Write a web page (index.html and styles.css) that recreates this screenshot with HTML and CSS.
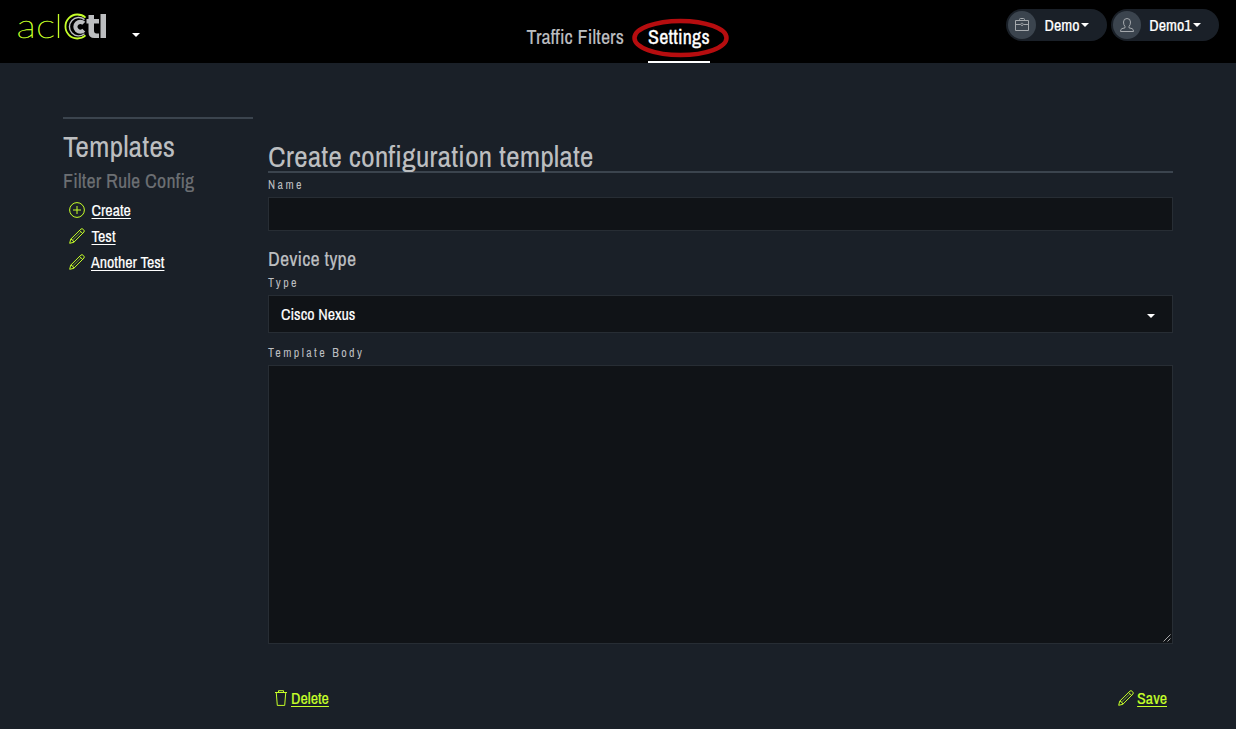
FILE: index.html
```
<!DOCTYPE html>
<html lang="en">
<head>
<meta charset="utf-8">
<title>aclCtl</title>
<link rel="stylesheet" href="styles.css">
</head>
<body>
<svg class="defs" aria-hidden="true">
  <symbol id="pencil" viewBox="0 0 16 16"><path d="M.7 15.300 1.700 11.200 11.900 1.100Q13 .2 14.300 1.400L14.600 1.700Q15.800 3 14.900 4.100L4.800 14.300ZM10.600 2.400l3 3M1.700 11.200q2.700.4 3.100 3.100" /><path class="faint" d="M3.400 12.300l8.600-8.500" /></symbol>
</svg>
<header class="topbar">
  <div class="brand">
    <svg class="logo" viewBox="0 0 90 36" role="img" aria-label="aclCtl">
      <text class="logo-thin" x="-1.500" y="26" textLength="38.500" lengthAdjust="spacingAndGlyphs">ac</text>
      <path class="logo-line" d="M40.500 2v24" />
      <path class="logo-ring" d="M67.500 5.600A12 12 0 1 0 67.500 23.400" />
      <path class="logo-arc" d="M66.500 7.600A9.200 9.200 0 1 0 66.500 21.800" />
      <path class="logo-c" d="M65.800 11.300A4.900 4.900 0 1 0 65.800 18.300" />
      <path class="logo-fill" d="M70.500 3h5.500v4h5v4.500h-5v7q0 3 2.500 3H81V26h-4.500q-6 0-6-6v-8.500h-2V7h2ZM82.500 2H88v24h-5.500Z" />
    </svg>
    <i class="caret"></i>
  </div>
  <nav class="nav">
    <a class="nav-link filters">Traffic Filters</a>
    <a class="nav-link active"><span>Settings</span>
      <svg class="ring" viewBox="0 0 98 40"><ellipse cx="49.500" cy="20" rx="46" ry="17" /></svg>
    </a>
  </nav>
  <div class="menus">
    <button class="pill team"><span class="disc"><svg viewBox="0 0 16 16"><path d="M1.500 3.500h13v10h-13ZM5.500 3.500v-1q0-1 1-1h3q1 0 1 1v1M1.500 7.500h5M9.500 7.500h5M8 6.200a1.200 1.200 0 1 0 .01 0" /></svg></span><b>Demo</b><i class="caret"></i></button>
    <button class="pill user"><span class="disc"><svg viewBox="0 0 16 16"><path d="M6 9.500Q4.500 8 4.500 5 4.500 1.500 8 1.500T11.500 5Q11.500 8 10 9.500v1.300l3 .8q1.500.5 1.500 2.900h-13q0-2.400 1.500-2.900l3-.8Z" /></svg></span><b>Demo1</b><i class="caret"></i></button>
  </div>
</header>
<main class="page">
  <aside class="sidebar">
    <h2 class="side-title"><span>Templates</span></h2>
    <h3 class="side-sub"><span>Filter Rule Config</span></h3>
    <ul class="links">
      <li><svg class="icon" viewBox="0 0 16 16"><circle cx="8" cy="8" r="7.400" /><path d="M8 4v8M4 8h8" /></svg><a class="l-create">Create</a></li>
      <li><svg class="icon"><use href="#pencil" /></svg><a class="l-test">Test</a></li>
      <li><svg class="icon"><use href="#pencil" /></svg><a class="l-another">Another Test</a></li>
    </ul>
  </aside>
  <form class="editor">
    <h1 class="title"><span>Create configuration template</span></h1>
    <label class="label label-name">Name</label>
    <input class="field name" type="text">
    <h2 class="section"><span>Device type</span></h2>
    <label class="label label-type">Type</label>
    <div class="field select"><span>Cisco Nexus</span><i class="caret"></i></div>
    <label class="label label-body">Template Body</label>
    <div class="field body"><svg class="grip" viewBox="0 0 8 8"><path d="M.5 7.500l7-7M4.500 7.500l3-3" /></svg></div>
    <div class="actions">
      <a class="action"><svg class="icon trash" viewBox="0 0 16 16"><path d="M2 2.500h12M5.500 2.500V.7h5v1.800M3.300 3l1 12.400h7.400l1-12.400" /></svg><span class="l-delete">Delete</span></a>
      <a class="action save"><svg class="icon"><use href="#pencil" /></svg><span class="l-save">Save</span></a>
    </div>
  </form>
</main>
</body>
</html>
```
FILE: styles.css
```
* { box-sizing: border-box; }
body {
  margin: 0;
  height: 729px;
  overflow: hidden;
  background: #1a2028;
  color: #bcbec0;
  font-family: "Archivo Narrow", "Liberation Sans Narrow", "Liberation Sans", sans-serif;
}
h1, h2, h3, ul { margin: 0; padding: 0; font-weight: 400; }
a, b, span { white-space: nowrap; }
.defs { position: absolute; width: 0; height: 0; }
.topbar { height: 63px; background: #000; display: grid; grid-template-columns: 526.5px 1fr 230px; }
.brand { display: flex; padding: 12px 0 0 18px; }
.logo { width: 90px; height: 36px; overflow: visible; }
.logo-thin { font: 200 34px/36px "Lato", sans-serif; fill: #c6ff28; stroke: #c6ff28; stroke-width: .5; }
.logo path { fill: none; }
.logo .logo-line { stroke: #c6ff28; stroke-width: 1.3; }
.logo .logo-ring { stroke: #c6ff28; stroke-width: 1.8; }
.logo .logo-arc { stroke: #bcbec0; stroke-width: 1.4; }
.logo .logo-c { stroke: #bcbec0; stroke-width: 4.3; }
.logo .logo-fill { fill: #bcbec0; }
.caret { width: 0; height: 0; border: 4px solid transparent; border-top-color: #fff; border-bottom: 0; }
.brand .caret { margin: 21px 0 0 24px; }
.nav { display: flex; gap: 24px; }
.nav-link { height: 63px; padding-top: 25px; font-size: 20px; line-height: 24px; letter-spacing: .12px; -webkit-text-stroke: .15px; }
.filters { width: 97.5px; }
.active { position: relative; width: 62px; color: #fff; border-bottom: 2px solid #fff; letter-spacing: .2px; -webkit-text-stroke: .3px; }
.ring { position: absolute; left: -17px; top: 18px; width: 98px; height: 40px; fill: none; stroke: #b60d0f; stroke-width: 4.5; }
.menus { display: flex; gap: 4px; padding-top: 9px; }
.pill { display: flex; align-items: center; height: 32px; padding: 0 0 0 2px; border: 0; border-radius: 16px; background: #1a2028; color: #fff; font: 400 16px/20px "Archivo Narrow", "Liberation Sans Narrow", "Liberation Sans", sans-serif; }
.pill b { font-weight: 400; -webkit-text-stroke: .2px; }
.team { width: 101px; }
.user { width: 108px; }
.team b { width: 38px; }
.user b { width: 45px; }
.disc { display: flex; align-items: center; justify-content: center; width: 28px; height: 28px; margin-right: 7px; border-radius: 50%; background: #3b444e; }
.disc svg { width: 16px; height: 16px; fill: none; stroke: #a5a9ad; }
.page { display: grid; grid-template-columns: 190px 905px; gap: 15px; padding: 54px 63px 0; }
.sidebar { border-top: 2px solid #3b444e; height: 170px; }
.side-title { font-size: 30px; line-height: 36px; padding-top: 9px; }
.side-sub { font-size: 20px; line-height: 24px; padding-top: 5px; color: #6c6f73; letter-spacing: .16px; -webkit-text-stroke: .15px; }
.links { list-style: none; padding: 4px 0 0 6px; }
.links li { display: flex; align-items: center; gap: 6.5px; height: 26px; color: #fff; font-size: 16px; }
.icon { width: 16px; height: 16px; fill: none; stroke: #c6ff28; stroke-width: 1; }
.faint { opacity: .5; }
.links a, .action span { text-decoration: underline; text-underline-offset: 2px; text-decoration-thickness: 1px; -webkit-text-stroke: .15px; }
.links .l-another { margin-left: -.5px; }
.editor { padding-top: 23px; }
.title { height: 33px; border-bottom: 2px solid #3b444e; font-size: 30px; line-height: 32px; }
.label { display: block; font-size: 12px; line-height: 14px; letter-spacing: 2.4px; }
.label-name { padding-top: 5px; height: 24px; }
.field { display: block; width: 905px; background: #101317; border: 1px solid #272d34; color: #fff; }
.name { height: 34px; }
.section { padding-top: 16px; font-size: 20px; line-height: 24px; height: 40px; letter-spacing: .14px; -webkit-text-stroke: .15px; }
.label-type { padding-top: 5px; height: 24px; }
.select { display: flex; align-items: center; justify-content: space-between; height: 38px; padding: 0 17px 0 12px; font-size: 16px; -webkit-text-stroke: .15px; }
.select .caret { margin-top: 3px; }
.label-body { padding-top: 13px; height: 32px; }
.body { display: flex; align-items: flex-end; justify-content: flex-end; height: 279px; padding: 1px; }
.grip { width: 8px; height: 8px; fill: none; stroke: #ccc; stroke-width: .8; }
.actions { display: flex; justify-content: space-between; padding: 44px 6px 0 5px; }
.action { display: flex; align-items: center; gap: 2px; height: 20px; color: #c6ff28; font-size: 16px; }
.save { gap: 3px; }
```
